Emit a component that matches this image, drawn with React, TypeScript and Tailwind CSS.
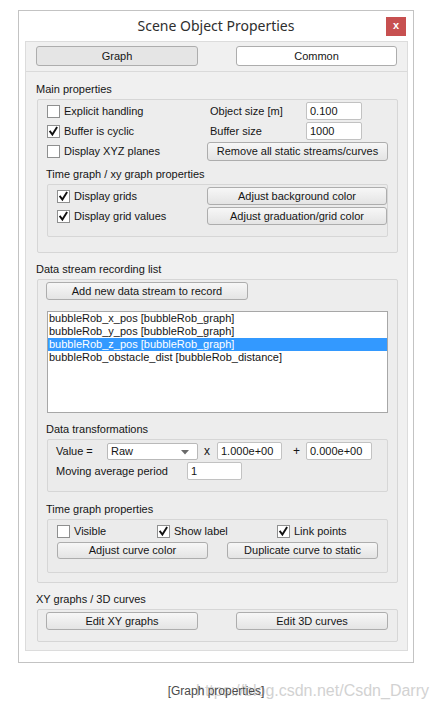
import React from "react";

function Check({ on }: { on?: boolean }) {
  return (
    <span className="inline-flex h-[13px] w-[13px] shrink-0 items-center justify-center border border-[#8e8f8f] bg-white">
      {on && (
        <svg width="11" height="11" viewBox="0 0 11 11">
          <path d="M2.2 5.6 L4.4 8.6 L8.6 1.8" fill="none" stroke="#111" strokeWidth="1.9" strokeLinecap="square" />
        </svg>
      )}
    </span>
  );
}

function CheckLabel({ on, label }: { on?: boolean; label: string }) {
  return (
    <span className="flex items-center">
      <Check on={on} />
      <span className="ml-[4px]">{label}</span>
    </span>
  );
}

function Btn({ className, children }: { className: string; children: React.ReactNode }) {
  return (
    <div
      className={
        "flex shrink-0 items-center justify-center rounded-[3px] border border-[#adadad] bg-gradient-to-b from-[#f7f7f7] to-[#e4e4e4] " +
        className
      }
    >
      {children}
    </div>
  );
}

function Field({ className, value }: { className: string; value: string }) {
  return (
    <div className={"flex h-[18px] shrink-0 items-center rounded-[2px] border border-[#c2c2c2] bg-white pl-[3px] " + className}>
      {value}
    </div>
  );
}

function Caption({ children, className = "" }: { children: React.ReactNode; className?: string }) {
  return <div className={"flex h-[20px] items-center " + className}>{children}</div>;
}

export default function App() {
  return (
    <div className="relative h-[706px] w-[440px] overflow-hidden bg-white font-['Liberation_Sans',Arial,sans-serif] text-[11px] leading-none text-[#151515]">
      <div className="pl-[18px] pt-[10px]">
        {/* Window */}
        <div className="flex h-[653px] w-[396px] flex-col border border-[#c3c3c3] bg-white">
          <div className="grid h-[30px] grid-cols-[1fr_auto_1fr] items-center">
            <div />
            <div className="font-['Noto_Sans',sans-serif] text-[14px] text-[#2e2e2e]">Scene Object Properties</div>
            <div className="flex justify-end pr-[7px]">
              <div className="flex h-[19px] w-[20px] items-center justify-center bg-[#c75050] pb-[2px] text-[11px] font-bold text-white">
                x
              </div>
            </div>
          </div>

          {/* Panel */}
          <div className="ml-[6px] h-[610px] w-[383px] border border-[#dcdcdc] bg-[#f0f0f0]">
            <div className="flex gap-[38px] pl-[10px] pt-[4px]">
              <div className="flex h-[20px] w-[162px] items-center justify-center rounded-[3px] border border-[#adadad] bg-[#e5e5e5]">
                Graph
              </div>
              <div className="flex h-[20px] w-[161px] items-center justify-center rounded-[3px] border border-[#adadad] bg-white">
                Common
              </div>
            </div>
            <div className="mt-[5px] h-px bg-[#dadada]" />

            <div className="pl-[10px]">
              {/* Main properties */}
              <Caption className="mt-[7px]">Main properties</Caption>
              <div className="ml-px h-[154px] w-[361px] rounded-[2px] border border-[#d6d6d6] bg-[#ededed] pl-[9px] pt-px">
                <div className="flex h-[20px] items-center">
                  <div className="w-[160px]">
                    <CheckLabel label="Explicit handling" />
                  </div>
                  <div className="w-[99px] pl-[3px]">Object size [m]</div>
                  <Field className="w-[56px]" value="0.100" />
                </div>
                <div className="flex h-[20px] items-center">
                  <div className="w-[160px]">
                    <CheckLabel on label="Buffer is cyclic" />
                  </div>
                  <div className="w-[99px] pl-[3px]">Buffer size</div>
                  <Field className="w-[56px]" value="1000" />
                </div>
                <div className="flex h-[20px] items-center">
                  <div className="w-[160px]">
                    <CheckLabel label="Display XYZ planes" />
                  </div>
                  <Btn className="h-[19px] w-[181px]">Remove all static streams/curves</Btn>
                </div>
                <Caption className="-ml-px mt-[3px]">Time graph / xy graph properties</Caption>
                <div className="h-[53px] w-[341px] rounded-[2px] border border-[#d6d6d6] bg-[#ebebeb] pl-[9px] pt-px">
                  <div className="flex h-[20px] items-center">
                    <div className="w-[150px]">
                      <CheckLabel on label="Display grids" />
                    </div>
                    <Btn className="h-[18px] w-[180px]">Adjust background color</Btn>
                  </div>
                  <div className="flex h-[20px] items-center">
                    <div className="w-[150px]">
                      <CheckLabel on label="Display grid values" />
                    </div>
                    <Btn className="h-[18px] w-[180px]">Adjust graduation/grid color</Btn>
                  </div>
                </div>
              </div>

              {/* Data stream recording list */}
              <Caption className="mt-[6px]">Data stream recording list</Caption>
              <div className="ml-px h-[304px] w-[361px] rounded-[2px] border border-[#d6d6d6] bg-[#ededed] pl-[9px] pt-[2px]">
                <Btn className="-ml-px h-[18px] w-[202px]">Add new data stream to record</Btn>
                <div className="mt-[11px] h-[102px] w-[341px] border border-[#a7a7a7] bg-white text-[11px] leading-[13px]">
                  <div className="pl-px">bubbleRob_x_pos [bubbleRob_graph]</div>
                  <div className="pl-px">bubbleRob_y_pos [bubbleRob_graph]</div>
                  <div className="bg-[#3399ff] pl-px text-white">bubbleRob_z_pos [bubbleRob_graph]</div>
                  <div className="pl-px">bubbleRob_obstacle_dist [bubbleRob_distance]</div>
                </div>

                <Caption className="-ml-px mt-[6px]">Data transformations</Caption>
                <div className="h-[53px] w-[341px] rounded-[2px] border border-[#d6d6d6] bg-[#ebebeb] pl-[8px] pt-px">
                  <div className="flex h-[20px] items-center">
                    <div className="w-[51px]">Value =</div>
                    <div className="relative flex h-[17px] w-[91px] items-center rounded-[2px] border border-[#b9b9b9] bg-white pl-[3px]">
                      Raw
                      <svg className="absolute right-[8px] top-[6px]" width="8" height="5" viewBox="0 0 8 5">
                        <path d="M0 0 H8 L4 4.5 Z" fill="#6a6a6a" />
                      </svg>
                    </div>
                    <div className="w-[19px] pl-[6px] text-[12px]">x</div>
                    <Field className="w-[65px]" value="1.000e+00" />
                    <div className="w-[24px] pl-[11px] text-[12px]">+</div>
                    <Field className="w-[66px]" value="0.000e+00" />
                  </div>
                  <div className="flex h-[20px] items-center">
                    <div className="w-[131px]">Moving average period</div>
                    <Field className="w-[55px]" value="1" />
                  </div>
                </div>

                <Caption className="-ml-px mt-[7px]">Time graph properties</Caption>
                <div className="h-[54px] w-[341px] rounded-[2px] border border-[#d6d6d6] bg-[#ebebeb] pl-[9px] pt-px">
                  <div className="flex h-[20px] items-center">
                    <div className="w-[100px]">
                      <CheckLabel label="Visible" />
                    </div>
                    <div className="w-[120px]">
                      <CheckLabel on label="Show label" />
                    </div>
                    <CheckLabel on label="Link points" />
                  </div>
                  <div className="mt-px flex gap-[19px]">
                    <Btn className="h-[17px] w-[151px]">Adjust curve color</Btn>
                    <Btn className="h-[17px] w-[151px]">Duplicate curve to static</Btn>
                  </div>
                </div>
              </div>

              {/* XY graphs */}
              <Caption className="mt-[6px]">XY graphs / 3D curves</Caption>
              <div className="ml-px flex h-[33px] w-[361px] gap-[38px] rounded-[2px] border border-[#d6d6d6] bg-[#ededed] pl-[8px] pt-[2px]">
                <Btn className="h-[18px] w-[152px]">Edit XY graphs</Btn>
                <Btn className="h-[18px] w-[152px]">Edit 3D curves</Btn>
              </div>
            </div>
          </div>
        </div>
      </div>

      {/* caption with watermark */}
      <div className="absolute left-[196px] top-[683px] font-['Liberation_Sans',Arial,sans-serif] text-[16px] leading-[16px] text-[#d2d2d2]">
        https://blog.csdn.net/Csdn_Darry
      </div>
      <div className="relative mt-[21px] w-[432px] text-center text-[12px] leading-[14px] text-[#4a4a4a]">[Graph properties]</div>
    </div>
  );
}
